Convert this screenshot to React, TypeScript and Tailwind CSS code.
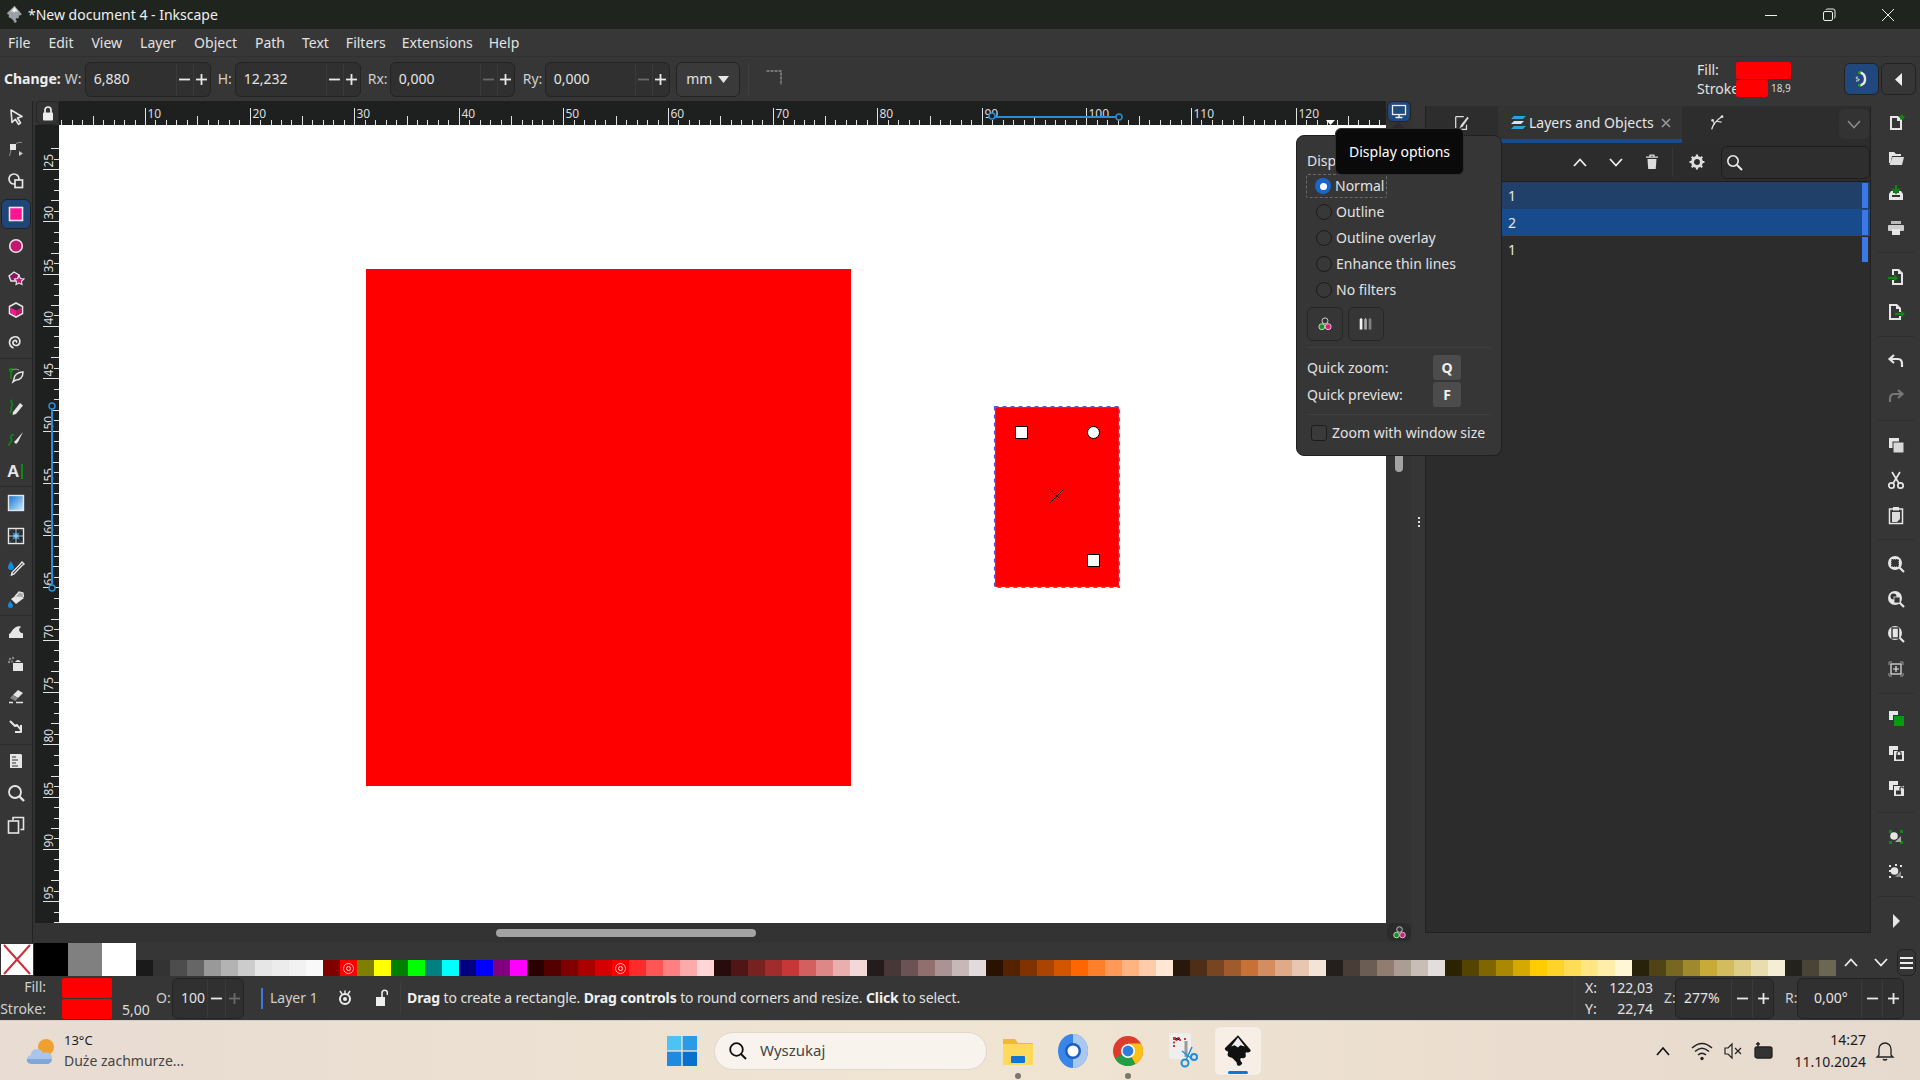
import React from "react";

const W = "#e6e6e6";
const PX = 10.46;

function S({ s = 20, children, className = "" }: { s?: number; children: React.ReactNode; className?: string }) {
  return (
    <svg width={s} height={s} viewBox="0 0 20 20" fill="none" className={"shrink-0 " + className}>
      {children}
    </svg>
  );
}

const tools: React.ReactNode[] = [
  <path d="M5 3 L16 9.5 L11.5 11 L14.5 16 L12.5 17.3 L9.3 12.3 L6 15.5 Z" fill="#3a3a3a" stroke={W} strokeWidth="1.6" strokeLinejoin="round" />,
  <g><rect x="4" y="5" width="6" height="6" fill={W} /><path d="M10 4.5 Q13 2.8 16 3.5" stroke="#888" strokeWidth="1" /><path d="M5 11 L3.5 17" stroke="#888" strokeWidth="1" /><path d="M13 12 L17 14.5 L13 17 Z" fill="#ccc" /></g>,
  <g><circle cx="8" cy="8" r="5" stroke={W} strokeWidth="1.7" /><rect x="9" y="9" width="7.5" height="7.5" fill="#333" stroke={W} strokeWidth="1.7" /></g>,
  <rect x="3.5" y="3.5" width="13" height="13" fill="#ff1493" stroke={W} strokeWidth="1.6" />,
  <circle cx="10" cy="10" r="6.3" fill="#c4176f" stroke={W} strokeWidth="1.6" />,
  <g><path d="M3 8 L8 4 L13 7 L11 13 L5 13 Z" fill="#8a1560" stroke={W} strokeWidth="1.4" /><path d="M13 7.5 L14.5 10.5 L18 11 L15.5 13.3 L16 16.5 L13 15 L10 16.5 L10.5 13.3 L8.5 11 L11.7 10.5 Z" fill="#c4176f" stroke={W} strokeWidth="1.1" /></g>,
  <g><path d="M10 3 L16.5 6.5 V13.5 L10 17 L3.5 13.5 V6.5 Z" fill="#333" stroke={W} strokeWidth="1.6" /><path d="M4.5 7.5 L10 10.5 V16 L4.5 13 Z" fill="#ff1493" /><path d="M15.5 7.5 L10 10.5 V16 L15.5 13 Z" fill="#c4176f" /></g>,
  <path d="M10 10.5 C11.5 9.5 10 8 8.5 8.5 C6 9.5 6.5 13.5 10 13.5 C14 13.5 15 8.5 12.5 6 C9.5 3.5 4 5 3.5 10 C3.5 13 5 15 7.5 16" stroke={W} strokeWidth="1.7" />,
  <g><circle cx="5" cy="5" r="2.2" fill="#0a8a12" /><path d="M5 7 V14" stroke="#0a8a12" strokeWidth="1.6" /><path d="M6 4.5 Q11 3.5 13 5" stroke="#999" strokeWidth="1" /><path d="M8 14 C8 10 12 7 17 7 C17 12 14 15 10 15 L7 17 Z" fill="#3a3a3a" stroke={W} strokeWidth="1.5" /></g>,
  <g><path d="M6 3 C3 5 8 7 6 9 C4 11 7 13 4 16" stroke="#0a8a12" strokeWidth="1.7" /><path d="M7 15 L14 6 L17 8.5 L10 17 L6.5 18 Z" fill={W} /></g>,
  <g><path d="M3 17 C2 13 8 13 5 9 C4 7 6 5 8 6" stroke="#0a8a12" strokeWidth="1.6" /><path d="M17 3 L10 11 L8 13 L10 15 L12 13 Z" fill={W} /></g>,
  <g><text x="1" y="16" fontFamily="'Liberation Sans',sans-serif" fontWeight="700" fontSize="17" fill={W}>A</text><rect x="15" y="3" width="2" height="15" fill="#0a8a12" /></g>,
  <g><rect x="2.5" y="2.5" width="15" height="15" fill="url(#grad1)" stroke={W} strokeWidth="1.4" /></g>,
  <g><rect x="2.5" y="2.5" width="15" height="15" fill="#2b2b2b" stroke={W} strokeWidth="1.4" /><path d="M3 3 Q10 12 17 3 Q8 10 17 17 Q10 8 3 17 Q12 10 3 3 Z" fill="#2a9be0" /><path d="M10 3 V17 M3 10 H17" stroke={W} strokeWidth="0.8" /></g>,
  <g><path d="M5 3 C3 6 2 7 2 9 A3 3 0 0 0 8 9 C8 7 6 6 5 3 Z" fill="#0f8de0" /><path d="M16 4 L18 6 L15.5 8 L8 16 L5.5 17 L6 14.5 L13.5 7 Z" fill="#333" stroke={W} strokeWidth="1.4" /></g>,
  <g><path d="M4 12 C2.5 14.5 2 15.5 2 16.5 A2.5 2.5 0 0 0 7 16.5 C7 15.5 5.5 14.5 4 12 Z" fill="#0f8de0" /><path d="M5 10 L12 5 L18 9 L10 15 Z" fill={W} /><path d="M9 7.5 L13 3 L17 4 L17.5 8" stroke={W} strokeWidth="1.2" fill="#aaa" /></g>,
  <path d="M3 16 V12 C5 12 6 7 10 5 C13 3.5 15 5 15 5 C13 6 12.5 8 14 10 C15 11 16 11.5 17 11 V16 Z" fill={W} />,
  <g><rect x="7" y="9" width="10" height="8" fill={W} /><path d="M9 8 Q12 4 15 8 Z" fill={W} /><circle cx="4" cy="5" r="1.2" fill="#888" /><circle cx="7" cy="4" r="1.2" fill="#888" /><circle cx="3" cy="8" r="1.2" fill="#888" /><circle cx="6" cy="7.5" r="1.2" fill="#777" /></g>,
  <g><path d="M7 9 L12 4 L17 7 L12 12 Z" fill={W} /><path d="M7 9 L12 12 L9.5 15 L4 12 Z" fill="#888" /><path d="M3 16.5 H7 M10 16.5 H17" stroke={W} strokeWidth="1.5" /></g>,
  <path d="M4 4 L9 9 L11 8 L15 13 M15 8 V15 H9" stroke={W} strokeWidth="2" strokeLinejoin="round" transform="translate(0 -1)" />,
  <g><path d="M4 3 H15 L16 4 V17 H4 Z" fill={W} /><path d="M6 6 H10 M6 9 H12 M6 12 H10 M6 15 H12" stroke="#333" strokeWidth="1.2" /></g>,
  <g><circle cx="9" cy="9" r="6" stroke={W} strokeWidth="1.8" /><path d="M13.5 13.5 L18 18" stroke={W} strokeWidth="2.4" /></g>,
  <g><rect x="2.5" y="6" width="10" height="12" fill="#333" stroke={W} strokeWidth="1.6" /><path d="M7 5 V2.5 H17.5 V14.5 H14.5" stroke={W} strokeWidth="1.6" /></g>,
];
const toolSep = new Set([7, 11, 15, 19]);

const Page = ({ children }: { children?: React.ReactNode }) => (
  <g>
    <path d="M4 3 H12 L16 7 V17 H4 Z M6 5 V15 H14 V8 H11 V5 Z" fill={W} fillRule="evenodd" />
    {children}
  </g>
);
const G = "#0a8a12";
const zoomG = (inner: React.ReactNode) => (
  <g>
    <circle cx="9" cy="9" r="7" fill={W} />
    <path d="M13.5 13.5 L18 18" stroke={W} strokeWidth="2.2" />
    {inner}
  </g>
);
const doubleSq = (inner: React.ReactNode) => (
  <g>
    <rect x="3" y="3" width="9" height="9" fill={W} />
    <rect x="7" y="7" width="10" height="10" fill="#333" />
    {inner}
  </g>
);
const rightGroups: React.ReactNode[][] = [
  [
    <g><Page /><path d="M16 0.5 L17 3 L19.5 3 L17.5 4.7 L18.2 7 L16 5.6 L13.8 7 L14.5 4.7 L12.5 3 L15 3 Z" fill={G} /></g>,
    <g><path d="M3 4 H8 L10 6 H15 V8 H6 L4.5 15 H3 Z" fill={W} /><path d="M6.5 9 H18 L16 17 H3.5 Z" fill="#ddd" /></g>,
    <g><path d="M3 11 L5 8 H7 V10 H13 V8 H15 L17 11 V17 H3 Z" fill={W} /><rect x="6" y="12" width="8" height="2" fill="#333" /><path d="M10 2 V9 M6.5 6 L10 10 L13.5 6" stroke={G} strokeWidth="2" /></g>,
    <g><rect x="5" y="3" width="10" height="3" fill="#bbb" /><rect x="2" y="7" width="16" height="6" rx="1" fill="#ccc" /><rect x="6" y="11" width="8" height="6" fill={W} /></g>,
  ],
  [
    <g><path d="M6 2 H13 L17 6 V18 H6 V13 H8 V16 H15 V7 H12 V4 H8 V8 H6 Z" fill={W} /><path d="M2 11 H10" stroke={G} strokeWidth="2.2" /><path d="M8 7.5 L12 11 L8 14.5 Z" fill={G} /></g>,
    <g><path d="M3 2 H11 L15 6 V10 H13 V7 H10 V4 H5 V16 H13 V14 H15 V18 H3 Z" fill={W} /><path d="M9 12 H17" stroke={G} strokeWidth="2.2" /><path d="M15 8.5 L19 12 L15 15.5 Z" fill={G} /></g>,
  ],
  [
    <path d="M8 4 L3.5 8 L8 12 M4 8 H12 C15 8 16 10 16 13 V16" stroke={W} strokeWidth="2.2" />,
    <path d="M12 4 L16.5 8 L12 12 M16 8 H8 C5 8 4 10 4 13 V16" stroke="#777" strokeWidth="2.2" />,
  ],
  [
    <g><rect x="3" y="3" width="10" height="10" fill={W} /><rect x="7" y="7" width="11" height="11" fill="#d8d8d8" stroke="#333" strokeWidth="1" /></g>,
    <g><circle cx="5.5" cy="15.5" r="2.7" stroke={W} strokeWidth="1.7" /><circle cx="14.5" cy="15.5" r="2.7" stroke={W} strokeWidth="1.7" /><path d="M7 13.5 L14 2 M13 13.5 L6 2" stroke={W} strokeWidth="1.7" /></g>,
    <g><rect x="3.5" y="4" width="13" height="14.5" fill="none" stroke={W} strokeWidth="1.5" /><rect x="7" y="2" width="6" height="3.5" fill={W} /><path d="M6 7 H14 V14 L11 17 H6 Z" fill="#ddd" /></g>,
  ],
  [
    zoomG(<rect x="5" y="5" width="8" height="8" fill="#333" stroke={W} strokeDasharray="1 1" />),
    zoomG(<g><circle cx="7.5" cy="7.5" r="3" fill="#333" /><rect x="8" y="8" width="6" height="6" fill="#333" stroke={W} strokeWidth="0.8" /></g>),
    zoomG(<rect x="6" y="4" width="6.5" height="10" fill={W} stroke="#333" strokeWidth="1.4" />),
    <g><path d="M6 3 H3 V6 M14 3 H17 V6 M3 14 V17 H6 M17 14 V17 H14" stroke="#999" strokeWidth="1" /><rect x="5" y="5" width="10" height="10" stroke={W} strokeWidth="1.2" /><path d="M10 7 V13 M7 10 H13" stroke={W} strokeWidth="1.2" /></g>,
  ],
  [
    doubleSq(<rect x="8" y="8" width="10" height="10" fill="#0a9a12" />),
    doubleSq(<g><rect x="8" y="8" width="10" height="10" fill={W} /><rect x="10" y="12" width="6" height="4.5" fill="#333" /><path d="M11 12 V10.5 A2 2 0 0 1 15 10.5 V12" stroke="#333" strokeWidth="1.2" /></g>),
    doubleSq(<g><rect x="8" y="8" width="10" height="10" fill={W} /><rect x="10" y="12.5" width="5" height="4" fill="#333" /><path d="M14 12.5 V10.5 A1.7 1.7 0 0 1 17.4 10.5" stroke="#333" strokeWidth="1.2" /></g>),
  ],
  [
    <g><path d="M3 3 H6 V6 H3 Z M14 3 H17 V6 H14 Z M3 14 H6 V17 H3 Z M14 14 H17 V17 H14 Z" fill={G} /><path d="M9 15 L15 9 V15 Z" fill="#aaa" /><circle cx="8" cy="9" r="3.8" fill={W} /></g>,
    <g><path d="M3 3 H5 V5 H3 Z M14 3 H16 V5 H14 Z M3 14 H5 V16 H3 Z M15 14 H17 V16 H15 Z M9 2 H11 V4 H9 Z M3 8 H5 V10 H3 Z" fill={W} /><path d="M9 15 L15 9 V15 Z" fill="#888" /><circle cx="8.5" cy="9" r="3.8" fill={W} /></g>,
  ],
  [<path d="M7 3 L14 10 L7 17 Z" fill={W} transform="translate(0 0) scale(1 1)" />],
];

const grays = "1a1a1a 333333 4d4d4d 666666 999999 b3b3b3 cccccc e6e6e6 ececec f2f2f2 f9f9f9";
const basics = "800000 ff0000 808000 ffff00 008000 00ff00 008080 00ffff 000080 0000ff 800080 ff00ff";
const rest =
  "2b0000 550000 800000 aa0000 d40000 ff0000 ff2a2a ff5555 ff8080 ffaaaa ffd5d5 280b0b 501616 782121 a02c2c c83737 d35f5f de8787 e9afaf f4d7d7 241c1c 483737 6c5353 916f6f ac9393 c8b7b7 e3dbdb 2b1100 552200 803300 aa4400 d45500 ff6600 ff7f2a ff9955 ffb380 ffccaa ffe6d5 28170b 502d16 784421 a05a2c c87137 d38d5f deaa87 e9c6af f4e3d7 241f1c 483e37 6c5d53 917c6f ac9d93 c8beb7 e3dedb 2b2200 554400 806600 aa8800 d4aa00 ffcc00 ffd42a ffdd55 ffe680 ffeeaa fff6d5 28220b 504416 786721 a0892c c8ab37 d3bc5f decd87 e9ddaf f4eed7 24221c 484537 6c6753";
const swatches = (grays + " " + basics + " " + rest).split(" ");
const markers = new Set([12, 28]);

function Pm({ dim = false, kind }: { dim?: boolean; kind: "m" | "p" }) {
  const c = dim ? "#6a6a6a" : "#e8e8e8";
  return (
    <svg width="13" height="13" viewBox="0 0 13 13">
      <path d="M1 6.5 H12" stroke={c} strokeWidth="1.8" />
      {kind === "p" && <path d="M6.5 1 V12" stroke={c} strokeWidth="1.8" />}
    </svg>
  );
}

function Spin({ value, w, cell = 17, dimMinus = false, dimPlus = false, pad = 8, h = "h-[35px]" }: { value: string; w: string; cell?: number; dimMinus?: boolean; dimPlus?: boolean; pad?: number; h?: string }) {
  return (
    <div className={w + " " + h + " flex items-center rounded-md border border-[#232323] bg-[#303030] shrink-0"}>
      <span className="flex-1 min-w-0 truncate text-[#e4e4e4]" style={{ paddingLeft: pad }}>{value}</span>
      <span className="h-full flex items-center justify-center border-l border-[#3a3a3a]" style={{ width: cell }}><Pm kind="m" dim={dimMinus} /></span>
      <span className="h-full flex items-center justify-center border-l border-[#3a3a3a]" style={{ width: cell }}><Pm kind="p" dim={dimPlus} /></span>
    </div>
  );
}

function HRuler() {
  const items: React.ReactNode[] = [];
  const zero = 145 - 59 - 10 * PX;
  for (let u = 2; u <= 128; u++) {
    const x = Math.round(zero + u * PX) + 0.5;
    const big = u % 10 === 0;
    const mid = u % 5 === 0;
    const h = big ? 17 : mid ? 9 : 5;
    items.push(<line key={u} x1={x} x2={x} y1={24 - h} y2={24} stroke="#e2e2e2" strokeWidth="1" />);
    if (big) items.push(<text key={"t" + u} x={x + 2} y={17} fontSize="12" fill="#dddddd" fontFamily="'Noto Sans',sans-serif">{u}</text>);
  }
  return (
    <svg width="1327" height="24" className="block">
      {items}
      <path d="M933 21 H938" stroke="none" />
      <line x1="933" x2="1060" y1="16" y2="16" stroke="#2a8bd6" strokeWidth="2" />
      <circle cx="933" cy="15" r="3" fill="#1e2020" stroke="#2a8bd6" strokeWidth="1.5" />
      <circle cx="1060" cy="16" r="3" fill="#1e2020" stroke="#2a8bd6" strokeWidth="1.5" />
      <path d="M1267 19 L1276 19 L1271.5 24 Z" fill="#ffffff" />
    </svg>
  );
}

function VRuler() {
  const items: React.ReactNode[] = [];
  for (let u = 23; u <= 97; u++) {
    const y = Math.round(169 - 125 + (u - 25) * PX) + 0.5;
    const big = u % 5 === 0;
    const mid = (u + 2) % 5 === 0 && false;
    const h = big ? 16 : u % 5 === 3 ? 8 : 5;
    items.push(<line key={u} y1={y} y2={y} x1={24 - (mid ? 8 : h)} x2={24} stroke="#e2e2e2" strokeWidth="1" />);
    if (big)
      items.push(
        <text key={"t" + u} x={0} y={0} fontSize="12" fill="#dddddd" fontFamily="'Noto Sans',sans-serif" transform={`translate(18 ${y - 2}) rotate(-90)`}>
          {u}
        </text>
      );
  }
  return (
    <svg width="24" height="798" className="block">
      {items}
      <line x1="17" x2="17" y1="281" y2="463" stroke="#2a8bd6" strokeWidth="2" />
      <circle cx="17" cy="281" r="3" fill="#1e2020" stroke="#2a8bd6" strokeWidth="1.5" />
      <circle cx="17" cy="463" r="3" fill="#1e2020" stroke="#2a8bd6" strokeWidth="1.5" />
    </svg>
  );
}

const ColorIcon = ({ s = 20 }: { s?: number }) => (
  <S s={s}>
    <circle cx="10" cy="6.5" r="3.3" stroke="#ddd" strokeWidth="1" fill="#333" />
    <circle cx="6.5" cy="13" r="3.3" stroke="#ddd" strokeWidth="1" fill="#0a9a12" />
    <circle cx="13.5" cy="13" r="3.3" stroke="#ddd" strokeWidth="1" fill="#e0187f" />
  </S>
);

function Radio({ label, on = false }: { label: string; on?: boolean }) {
  return (
    <div className={"h-[26px] flex items-center " + (on ? "" : "")}>
      <div className={on ? "h-[24px] w-[81px] -ml-[1px] pl-[8px] flex items-center border border-dashed border-[#6a6a6a] rounded-[2px]" : "pl-[9px] flex items-center"}>
        {on ? (
          <span className="w-4 h-4 rounded-full bg-[#1a66cc] flex items-center justify-center shrink-0"><span className="w-[7px] h-[7px] rounded-full bg-white" /></span>
        ) : (
          <span className="w-4 h-4 rounded-full border border-[#1c1c1c] bg-[#383838] shrink-0" />
        )}
        <span className="ml-[4px] whitespace-nowrap">{label}</span>
      </div>
    </div>
  );
}

const Row = ({ n, bg }: { n: string; bg: string }) => (
  <div className={"h-[27px] flex items-center " + bg}>
    <span className="ml-[82px] flex-1 text-[#e6e6e6]">{n}</span>
    <span className="w-[6px] h-[25px] bg-[#3b78e7] mr-[2px]" />
  </div>
);

const InkLogo = ({ s = 30, c = "#111" }: { s?: number; c?: string }) => (
  <svg width={s} height={s} viewBox="0 0 30 30">
    <path d="M15 1 L26 14 C27 16 24 17 22 16 C21 18 23 19 21 21 C19 22 18 20 17 22 C17 25 20 25 18 27 C16 29 14 28 14 26 C14 24 12 24 11 22 C9 20 7 21 6 19 C5 17 8 16 5 15 C3 14 3 13 4 12 Z" fill={c} />
    <path d="M15 3 L21 11 L17 10 L15 12 L12 10 L9 11 Z" fill="#eeeeee" />
  </svg>
);

export default function App() {
  return (
    <div className="relative w-[1920px] h-[1080px] overflow-hidden flex flex-col bg-[#363636] text-[14px] text-[#e2e2e2] font-['Noto_Sans',sans-serif] leading-none">
      <svg width="0" height="0" className="absolute">
        <defs>
          <linearGradient id="grad1" x1="0" y1="0" x2="1" y2="1">
            <stop offset="0" stopColor="#0f6fd0" />
            <stop offset="1" stopColor="#cfeeff" />
          </linearGradient>
        </defs>
      </svg>

      {/* Title bar */}
      <div className="h-[29px] bg-[#1f241e] flex items-center shrink-0">
        <div className="ml-[3px] w-[22px] flex justify-center"><InkLogo s={19} c="#9aa0a6" /></div>
        <span className="ml-[3px] text-[14px] text-[#f0f0f0]">*New document 4 - Inkscape</span>
        <div className="ml-auto flex items-center">
          <svg width="14" height="14" viewBox="0 0 14 14" className="mr-[44px]"><path d="M1 7.5 H13" stroke="#eee" strokeWidth="1" /></svg>
          <svg width="14" height="14" viewBox="0 0 14 14" className="mr-[45px]"><rect x="1.5" y="3.5" width="9" height="9" rx="1.5" stroke="#eee" fill="none" /><path d="M4 2 Q4 1 5.5 1 H11 Q13 1 13 3 V9 Q13 10 12 10" stroke="#eee" fill="none" /></svg>
          <svg width="14" height="14" viewBox="0 0 14 14" className="mr-[25px]"><path d="M1 1 L13 13 M13 1 L1 13" stroke="#eee" strokeWidth="1" /></svg>
        </div>
      </div>

      {/* Menu */}
      <div className="h-[28px] bg-[#373737] flex items-center shrink-0 border-b border-[#303030]">
        {[["File", "ml-[8px]"], ["Edit", "ml-[18px]"], ["View", "ml-[18px]"], ["Layer", "ml-[18px]"], ["Object", "ml-[18px]"], ["Path", "ml-[18px]"], ["Text", "ml-[17px]"], ["Filters", "ml-[17px]"], ["Extensions", "ml-[16px]"], ["Help", "ml-[16px]"]].map(([t, m]) => (
          <span key={t} className={m + " text-[#e2e2e2]"}>{t}</span>
        ))}
      </div>

      {/* Tool controls */}
      <div className="h-[44px] bg-[#363636] flex items-center shrink-0">
        <span className="ml-[4px] font-bold text-[#eeeeee]">Change:</span>
        <span className="ml-[4px] w-[20px] text-[#cfcfcf]">W:</span>
        <Spin value="6,880" w="w-[126px]" />
        <span className="ml-[7px] w-[17px] text-[#cfcfcf]">H:</span>
        <Spin value="12,232" w="w-[126px]" />
        <span className="ml-[7px] w-[22px] text-[#cfcfcf]">Rx:</span>
        <Spin value="0,000" w="w-[125px]" dimMinus />
        <span className="ml-[8px] w-[22px] text-[#cfcfcf]">Ry:</span>
        <Spin value="0,000" w="w-[125px]" dimMinus />
        <div className="ml-[6px] w-[64px] h-[35px] rounded-md border border-[#232323] bg-[#3a3a3a] flex items-center justify-center gap-[6px] shrink-0">
          <span>mm</span>
          <svg width="11" height="7" viewBox="0 0 11 7"><path d="M0 0 H11 L5.5 7 Z" fill="#e6e6e6" /></svg>
        </div>
        <span className="ml-[8px] w-px h-[32px] bg-[#3f3f3f]" />
        <svg width="16" height="18" viewBox="0 0 16 18" className="ml-[17px]"><path d="M0.5 1 H15 V15" stroke="#8a8a8a" strokeWidth="1.5" fill="none" strokeDasharray="3 1" /></svg>
        <div className="ml-auto flex items-center">
          <div className="flex flex-col w-[39px] gap-[5px] text-[14px] text-[#e2e2e2]">
            <span>Fill:</span>
            <span>Stroke:</span>
          </div>
          <div className="flex flex-col gap-px w-[55px] ml-[0px]">
            <div className="h-[17px] bg-[#ff0000] rounded-[2px] flex"><span className="w-[28px] border-r border-[#d81010]" /></div>
            <div className="h-[17px] flex items-center">
              <span className="w-[32px] h-full bg-[#ff0000] rounded-[2px]" />
              <span className="ml-[3px] text-[10px] text-[#dddddd]">18,9</span>
            </div>
          </div>
          <div className="ml-[53px] w-[35px] h-[32px] rounded-md bg-[#21487c] border border-[#222] flex items-center justify-center">
            <S s={20}><path d="M8 3.5 A6.7 6.7 0 0 1 8 16.5" stroke={W} strokeWidth="2.4" /><rect x="6" y="2.5" width="2.5" height="2.5" fill="#1a9a20" /><rect x="6" y="15" width="2.5" height="2.5" fill="#1a9a20" /><path d="M6 8 C3 8 3.5 10 6 10 C8 10 8 12 4 12" stroke={W} strokeWidth="1" /></S>
          </div>
          <div className="ml-[2px] mr-[4px] w-[35px] h-[32px] rounded-md bg-[#363636] border border-[#222] flex items-center justify-center">
            <svg width="8" height="13" viewBox="0 0 8 13"><path d="M7 0 V13 L0 6.5 Z" fill="#eee" /></svg>
          </div>
        </div>
      </div>

      {/* Main */}
      <div className="flex-1 min-h-0 flex">
        {/* left toolbar */}
        <div className="w-[33px] shrink-0 flex flex-col border-r border-[#222222] bg-[#363636]">
          {tools.map((t, i) => (
            <div key={i} className={"h-[32.2px] shrink-0 flex items-center justify-center " + (toolSep.has(i) ? "border-b border-[#2b2b2b]" : "")}>
              {i === 3 ? (
                <div className="w-[30px] h-[30px] rounded-md bg-[#1f4677] border border-[#222] flex items-center justify-center"><S s={20}>{t}</S></div>
              ) : (
                <S s={20}>{t}</S>
              )}
            </div>
          ))}
        </div>

        {/* rulers + canvas */}
        <div className="w-[1353px] shrink-0 flex flex-col bg-[#333333]">
          <div className="h-[24px] shrink-0 flex">
            <div className="w-[26px] pl-[3px] shrink-0 flex">
              <div className="w-[23px] h-[24px] rounded-b-md rounded-t-sm bg-[#333333] border border-[#262626] flex items-center justify-center">
                <svg width="12" height="15" viewBox="0 0 12 15"><path d="M3 7 V4 A3 3 0 0 1 9 4 V7" stroke="#eee" strokeWidth="1.7" fill="none" /><rect x="1" y="6.5" width="10" height="8" rx="1" fill="#eee" /></svg>
              </div>
            </div>
            <div className="flex-1 bg-[#1e2020]"><HRuler /></div>
          </div>
          <div className="flex-1 min-h-0 flex">
            <div className="w-[26px] pl-[2px] shrink-0">
              <div className="w-[24px] h-[798px] bg-[#1e2020]"><VRuler /></div>
            </div>
            <div className="relative flex-1 bg-white overflow-hidden">
              <div className="absolute left-[307px] top-[144px] w-[485px] h-[517px] bg-[#ff0000]" />
              <svg width="1327" height="798" className="absolute left-0 top-0">
                <rect x="935.5" y="281.5" width="125" height="181" fill="#ff0000" />
                <rect x="935.5" y="281.5" width="125" height="181" fill="none" stroke="#ffffff" strokeWidth="1.2" />
                <rect x="935.5" y="281.5" width="125" height="181" fill="none" stroke="#6a4fd8" strokeWidth="1.2" strokeDasharray="4 4" />
                <rect x="956.5" y="301.5" width="12" height="12" fill="#fff" stroke="#000" />
                <circle cx="1034.5" cy="307.5" r="6" fill="#fff" stroke="#000" />
                <rect x="1028.5" y="429.5" width="12" height="12" fill="#fff" stroke="#000" />
                <path d="M991.5 364.5 L1004.5 377.5 M1004.5 364.5 L991.5 377.5" stroke="#000" strokeWidth="1" />
              </svg>
            </div>
          </div>
          <div className="h-[20px] shrink-0 flex items-center">
            <div className="w-[463px] shrink-0" />
            <div className="w-[260px] h-[8px] rounded-full bg-[#a3a3a3]" />
          </div>
        </div>

        {/* vertical scrollbar column */}
        <div className="w-[26px] shrink-0 flex flex-col items-center bg-[#333333] pb-[2px]">
          <div className="w-[24px] h-[21px] rounded-md bg-[#214a7e] border border-[#232323] flex items-center justify-center">
            <svg width="16" height="15" viewBox="0 0 16 15"><rect x="1.5" y="1.5" width="13" height="9" stroke="#eee" strokeWidth="1.3" fill="none" /><path d="M8 11 V13 M4.5 13.5 H11.5" stroke="#eee" strokeWidth="1.5" /></svg>
          </div>
          <div className="w-2 h-[70px] mt-[280px] rounded-full bg-[#a3a3a3]" />
          <div className="mt-auto w-[24px] h-[18px] rounded-md bg-[#2b2b2b] flex items-center justify-center"><ColorIcon s={17} /></div>
        </div>

        {/* handle */}
        <div className="w-[13px] shrink-0 flex flex-col items-center justify-center gap-[2px]">
          <span className="w-[2px] h-[2px] bg-[#dddddd]" />
          <span className="w-[2px] h-[2px] bg-[#dddddd]" />
          <span className="w-[2px] h-[2px] bg-[#dddddd]" />
        </div>

        {/* dock panel */}
        <div className="w-[446px] shrink-0 mt-[5px] mb-[10px] flex flex-col bg-[#2c2c2c] border border-[#202020] border-t-0">
          <div className="h-[37px] shrink-0 flex bg-[#2d2d2d]">
            <div className="w-[72px] flex items-center justify-center pb-[3px]">
              <S s={18}><path d="M3 3 H12 M3 3 V17 H15 V12" stroke="#ddd" strokeWidth="1.4" /><path d="M16 3 L9 12 L7 16 L11 13.5 L17.5 4.5 Z" fill="#ddd" /></S>
            </div>
            <div className="w-[184px] h-[37px] flex items-center bg-[#333333] border-b-4 border-[#1a4a8c]">
              <svg width="16" height="15" viewBox="0 0 16 15" className="ml-[13px]"><path d="M3 1 H15 L12 4 H0 Z" fill="#2aa0e0" /><path d="M3 6 H13 L10 9 H0 Z" fill="#cfe8f5" /><path d="M3 11 H15 L12 14 H0 Z" fill="#2aa0e0" /></svg>
              <span className="ml-[2px] whitespace-nowrap text-[#e6e6e6]">Layers and Objects</span>
              <svg width="10" height="10" viewBox="0 0 10 10" className="ml-[7px]"><path d="M1 1 L9 9 M9 1 L1 9" stroke="#999" strokeWidth="1.6" /></svg>
            </div>
            <div className="w-[72px] flex items-center justify-center pb-[3px]">
              <S s={18}><path d="M3 17 C4 12 7 8 14 3" stroke="#ddd" strokeWidth="1.5" /><circle cx="14.5" cy="3" r="1.5" fill="#ddd" /><circle cx="4" cy="7" r="1.5" fill="#ddd" /><path d="M5 8 L6 12 M8 8 L14 9" stroke="#ddd" strokeWidth="1.2" /></S>
            </div>
            <div className="ml-auto mr-px mt-[3px] w-[30px] h-[30px] rounded-md bg-[#333333] flex items-center justify-center">
              <svg width="14" height="9" viewBox="0 0 14 9"><path d="M1 1 L7 7.5 L13 1" stroke="#8a8a8a" strokeWidth="1.6" fill="none" /></svg>
            </div>
          </div>
          <div className="h-[39px] shrink-0 flex items-center border-b border-[#1e1e1e]">
            <svg width="14" height="9" viewBox="0 0 14 9" className="ml-[147px]"><path d="M1 8 L7 1.5 L13 8" stroke="#eee" strokeWidth="1.8" fill="none" /></svg>
            <svg width="14" height="9" viewBox="0 0 14 9" className="ml-[22px]"><path d="M1 1 L7 7.5 L13 1" stroke="#eee" strokeWidth="1.8" fill="none" /></svg>
            <svg width="14" height="16" viewBox="0 0 14 16" className="ml-[22px]"><path d="M1 3 H13 M5 3 V1 H9 V3" stroke="#ddd" strokeWidth="1.3" fill="none" /><path d="M2.5 5 H11.5 L10.8 15 H3.2 Z" fill="#ddd" /></svg>
            <span className="ml-[13px] w-px h-[30px] bg-[#353535]" />
            <svg width="16" height="16" viewBox="0 0 16 16" className="ml-[16px]"><circle cx="8" cy="8" r="4.5" stroke="#ddd" strokeWidth="3" fill="none" strokeDasharray="none" /><path d="M8 0.5 V3 M8 13 V15.5 M0.5 8 H3 M13 8 H15.5 M2.7 2.7 L4.5 4.5 M11.5 11.5 L13.3 13.3 M13.3 2.7 L11.5 4.5 M4.5 11.5 L2.7 13.3" stroke="#ddd" strokeWidth="2.2" /></svg>
            <div className="ml-[16px] w-[150px] h-[33px] rounded-md border border-[#1e1e1e] bg-[#2e2e2e] flex items-center">
              <svg width="17" height="17" viewBox="0 0 17 17" className="ml-[4px]"><circle cx="7" cy="7" r="5.2" stroke="#eee" strokeWidth="1.6" fill="none" /><path d="M11 11 L16 16" stroke="#eee" strokeWidth="2" /></svg>
            </div>
          </div>
          <Row n="1" bg="bg-[#20406a]" />
          <Row n="2" bg="bg-[#174b8c]" />
          <Row n="1" bg="" />
        </div>

        {/* right command bar */}
        <div className="flex-1 pt-[4.5px] flex flex-col items-center">
          {rightGroups.map((g, i) => (
            <div key={i} className="w-full flex flex-col items-center">
              {g.map((ic, j) => (
                <div key={j} className="h-[35px] flex items-center justify-center"><S s={20}>{ic}</S></div>
              ))}
              {i < rightGroups.length - 1 && (
                <div className="h-[14px] w-[36px] flex items-center"><span className="w-full h-px bg-[#2e2e2e]" /></div>
              )}
            </div>
          ))}
        </div>
      </div>

      {/* Palette */}
      <div className="h-[33px] shrink-0 flex items-end bg-[#363636]">
        <div className="w-[34px] h-[33px] bg-white shrink-0 border border-[#333]">
          <svg width="32" height="31" viewBox="0 0 32 31"><path d="M3 1 L29 30 M29 1 L3 30" stroke="#c8303a" strokeWidth="2" /></svg>
        </div>
        <span className="w-[34px] h-[33px] bg-black shrink-0" />
        <span className="w-[34px] h-[33px] bg-[#808080] shrink-0" />
        <span className="w-[34px] h-[33px] bg-white shrink-0" />
        {swatches.map((c, i) => (
          <span key={i} className="w-[17px] h-[16px] shrink-0 flex items-center justify-center" style={{ backgroundColor: "#" + c }}>
            {markers.has(i) && (
              <span className="w-[11px] h-[11px] rounded-full border border-[#ffc0c0] flex items-center justify-center"><span className="w-[5px] h-[5px] rounded-full border border-[#ffd8d8]" /></span>
            )}
          </span>
        ))}
        <div className="flex items-center h-[27px] ml-[8px]">
          <svg width="14" height="9" viewBox="0 0 14 9"><path d="M1 8 L7 1.5 L13 8" stroke="#eee" strokeWidth="1.8" fill="none" /></svg>
          <svg width="14" height="9" viewBox="0 0 14 9" className="ml-[16px]"><path d="M1 1 L7 7.5 L13 1" stroke="#eee" strokeWidth="1.8" fill="none" /></svg>
          <div className="ml-[9px] w-[19px] h-[27px] rounded-md border border-[#222] flex flex-col items-center justify-center gap-[3px]">
            <span className="w-[13px] h-[2px] bg-[#eee]" />
            <span className="w-[13px] h-[2px] bg-[#eee]" />
            <span className="w-[13px] h-[2px] bg-[#eee]" />
          </div>
        </div>
      </div>

      {/* Status bar */}
      <div className="h-[44px] shrink-0 flex items-center bg-[#363636]">
        <div className="w-[46px] flex flex-col items-end gap-[8px] text-[#cfcfcf]">
          <span>Fill:</span>
          <span>Stroke:</span>
        </div>
        <div className="ml-[16px] w-[50px] flex flex-col gap-px">
          <span className="h-[20px] bg-[#ff0000] rounded-[2px]" />
          <span className="h-[20px] bg-[#ff0000] rounded-[2px]" />
        </div>
        <span className="ml-[10px] w-[27px] self-end mb-[3px] text-[#dddddd]">5,00</span>
        <span className="ml-[7px] w-[16px] text-[#cfcfcf]">O:</span>
        <Spin value="100" w="w-[72px]" cell={18} h="h-[41px]" dimPlus />
        <span className="ml-[17px] w-[2px] h-[21px] bg-[#3b78e7]" />
        <span className="ml-[7px] w-[62px] text-[#d0d0d0]">Layer 1</span>
        <svg width="16" height="16" viewBox="0 0 16 16" className="ml-[5px]"><circle cx="8" cy="9" r="5" stroke="#eee" strokeWidth="2" fill="none" /><circle cx="8" cy="9" r="2" fill="#eee" /><path d="M3 1 L5 4 M13 1 L11 4 M8 0.5 V3" stroke="#eee" strokeWidth="1.4" /></svg>
        <svg width="14" height="18" viewBox="0 0 14 18" className="ml-[21px]"><path d="M8 8 V4 A2.7 2.7 0 0 1 13.4 4 V6" stroke="#eee" strokeWidth="1.6" fill="none" /><rect x="2" y="8" width="9" height="9" fill="#eee" /></svg>
        <span className="ml-[12px] w-px h-[32px] bg-[#3f3f3f]" />
        <span className="ml-[6px] flex-1 whitespace-nowrap text-[#e2e2e2] tracking-[-0.1px]"><b className="text-[#f0f0f0]">Drag</b> to create a rectangle. <b className="text-[#f0f0f0]">Drag controls</b> to round corners and resize. <b className="text-[#f0f0f0]">Click</b> to select.</span>
        <span className="w-px h-[44px] bg-[#3c3c3c]" />
        <div className="ml-[10px] w-[68px] flex flex-col gap-[7px] text-[#e2e2e2]">
          <div className="flex justify-between"><span>X:</span><span>122,03</span></div>
          <div className="flex justify-between"><span>Y:</span><span>22,74</span></div>
        </div>
        <span className="ml-[11px] w-[11px] text-[#cfcfcf]">Z:</span>
        <Spin value="277%" w="w-[99px]" cell={21} h="h-[41px]" />
        <span className="ml-[11px] w-[12px] text-[#cfcfcf]">R:</span>
        <Spin value="0,00°" w="w-[107px]" cell={21} pad={16} h="h-[41px]" />
        <span className="w-[16px]" />
      </div>

      {/* Taskbar */}
      <div className="h-[60px] shrink-0 flex items-center bg-gradient-to-r from-[#e8dcd3] via-[#f0e4d2] to-[#e6d9ce] text-[#1c1c1c] border-t border-[#d8cdc2]">
        <div className="w-[667px] shrink-0 flex items-center">
          <svg width="34" height="30" viewBox="0 0 34 30" className="ml-[24px]">
            <circle cx="22" cy="11" r="8" fill="#f0a030" />
            <path d="M8 28 C2 28 1 20 7 19 C7 12 17 11 19 17 C26 15 30 20 27 24 C27 27 25 28 23 28 Z" fill="#a9c6ea" />
            <path d="M8 28 C4 28 2 25 3 23 H28 C28 26 25 28 23 28 Z" fill="#7fa7dc" />
          </svg>
          <div className="ml-[6px] flex flex-col gap-[7px]">
            <span className="text-[13px]">13°C</span>
            <span className="text-[14px] text-[#444]">Duże zachmurze...</span>
          </div>
        </div>
        <svg width="30" height="30" viewBox="0 0 30 30" className="shrink-0">
          <rect width="14.3" height="14.3" fill="#4cc2f5" />
          <rect x="15.7" width="14.3" height="14.3" fill="#2a9be8" />
          <rect y="15.7" width="14.3" height="14.3" fill="#1f8ae0" />
          <rect x="15.7" y="15.7" width="14.3" height="14.3" fill="#0a70d0" />
        </svg>
        <div className="ml-[17px] w-[273px] h-[38px] rounded-full bg-[#f8f3ec] border border-[#e0d8cc] flex items-center shrink-0">
          <svg width="20" height="20" viewBox="0 0 20 20" className="ml-[13px]"><circle cx="8.5" cy="8.5" r="6.3" stroke="#111" strokeWidth="1.8" fill="none" /><path d="M13 13 L18 18" stroke="#111" strokeWidth="2" /></svg>
          <span className="ml-[12px] text-[15px] text-[#444]">Wyszukaj</span>
        </div>
        <div className="ml-[3px] w-[55px] h-[60px] shrink-0 flex flex-col items-center justify-center relative">
          <svg width="30" height="30" viewBox="0 0 30 30"><path d="M0 3 H12 L15 7 H30 V28 H0 Z" fill="#f3b92e" /><path d="M0 8 H30 V29 H0 Z" fill="#ffd95a" /><rect x="8" y="20" width="14" height="7" rx="1" fill="#0c78d0" /></svg>
          <span className="absolute bottom-[2px] w-[6px] h-[6px] rounded-full bg-[#7b7670]" />
        </div>
        <div className="w-[55px] shrink-0 flex justify-center">
          <svg width="30" height="34" viewBox="0 0 30 34"><ellipse cx="15" cy="17" rx="15" ry="17" fill="#3a86e8" /><path d="M15 0 A15 17 0 0 1 30 17 A15 17 0 0 1 15 34 Z" fill="#a8c8f2" /><circle cx="15" cy="17" r="8" fill="#1a5fc0" /><circle cx="15" cy="17" r="5.5" fill="#ffffff" /></svg>
        </div>
        <div className="w-[55px] h-[60px] shrink-0 flex items-center justify-center relative">
          <svg width="30" height="34" viewBox="-15 -15 30 30">
            <circle r="15" fill="#dd3b2c" />
            <path d="M0 0 L-13 7.5 A15 15 0 0 0 7.5 13 Z" fill="#1f9d47" />
            <path d="M0 0 L7.5 13 A15 15 0 0 0 13 -7.5 L0 -7.5 Z" fill="#fbc117" />
            <circle r="7" fill="#fff" />
            <circle r="5.4" fill="#2d7de0" />
          </svg>
          <span className="absolute bottom-[2px] w-[6px] h-[6px] rounded-full bg-[#7b7670]" />
        </div>
        <div className="w-[55px] shrink-0 flex justify-center">
          <svg width="30" height="36" viewBox="0 0 30 36"><rect x="1" y="0" width="22" height="26" rx="3" fill="#eeeeee" /><path d="M6 5 H12 V7 H6 Z M6 5 V14 M17 5 V7" stroke="#d03a2c" strokeWidth="2" strokeDasharray="2 1.5" /><path d="M18 8 V24" stroke="#9a9a9a" strokeWidth="3" /><circle cx="17" cy="30" r="3.5" stroke="#1d8fe0" strokeWidth="2" fill="none" /><circle cx="26" cy="24" r="3" stroke="#1d8fe0" strokeWidth="2" fill="none" /><path d="M18 27 L24 14 M24 26 L14 18" stroke="#1d8fe0" strokeWidth="1.5" /></svg>
        </div>
        <div className="ml-[4px] w-[48px] h-[50px] rounded-md bg-[#f7efe5] border border-[#e8dfd2] shrink-0 flex flex-col items-center justify-center relative">
          <InkLogo s={34} />
          <span className="absolute bottom-[1px] w-[20px] h-[3px] rounded-full bg-[#0a78d4]" />
        </div>
        <div className="flex-1" />
        <svg width="16" height="10" viewBox="0 0 16 10"><path d="M2 9 L8 2 L14 9" stroke="#111" strokeWidth="1.6" fill="none" /></svg>
        <svg width="22" height="20" viewBox="0 0 22 20" className="ml-[20px]"><path d="M1 7 Q11 -2 21 7 M4 10.5 Q11 4 18 10.5 M7 14 Q11 10.5 15 14" stroke="#222" strokeWidth="1.6" fill="none" /><circle cx="11" cy="17.5" r="1.7" fill="#222" /></svg>
        <svg width="18" height="18" viewBox="0 0 18 18" className="ml-[11px]"><path d="M1 6 H4 L8 2 V16 L4 12 H1 Z" stroke="#222" strokeWidth="1.2" fill="none" /><path d="M11 6 L17 12 M17 6 L11 12" stroke="#222" strokeWidth="1.2" /></svg>
        <svg width="20" height="20" viewBox="0 0 20 20" className="ml-[12px]"><rect x="1" y="6" width="17" height="11" rx="2" stroke="#222" strokeWidth="1.3" fill="#333" /><path d="M4 1 V6 M2 3 H6" stroke="#222" strokeWidth="1.5" /></svg>
        <div className="w-[92px] flex flex-col items-end gap-[8px] text-[14px] text-[#1c1c1c]">
          <span>14:27</span>
          <span>11.10.2024</span>
        </div>
        <svg width="20" height="22" viewBox="0 0 20 22" className="ml-[9px] mr-[25px]"><path d="M4 15 V9 A6 6 0 0 1 16 9 V15 L18 17 H2 Z" stroke="#222" strokeWidth="1.3" fill="none" /><path d="M8 19 A2.5 2.5 0 0 0 12 19" stroke="#222" strokeWidth="1.3" fill="none" /></svg>
      </div>

      {/* Display options popover */}
      <div className="absolute left-[1296px] top-[135px] w-[206px] h-[321px] rounded-lg bg-[#363636] border border-[#202020] px-[10px] pt-[12px] flex flex-col text-[14px] text-[#e2e2e2]">
        <div className="h-[25px] flex items-center">Display mode:</div>
        <Radio label="Normal" on />
        <Radio label="Outline" />
        <Radio label="Outline overlay" />
        <Radio label="Enhance thin lines" />
        <Radio label="No filters" />
        <div className="mt-[4px] flex gap-[5px]">
          <div className="w-[36px] h-[34px] rounded-md border border-[#262626] flex items-center justify-center"><ColorIcon s={18} /></div>
          <div className="w-[36px] h-[34px] rounded-md border border-[#262626] flex items-center justify-center">
            <S s={18}><path d="M3 5 L4.5 3 L6 5 V16 H3 Z" fill="#f4f4f4" /><path d="M8 5 L9.5 3 L11 5 V16 H8 Z" fill="#a8a8a8" /><path d="M13 5 L14.5 3 L16 5 V16 H13 Z" fill="#808080" /></S>
          </div>
        </div>
        <div className="mt-[6px] h-px bg-[#3f3f3f]" />
        <div className="mt-[7px] flex items-center h-[25px]">
          <span className="w-[126px]">Quick zoom:</span>
          <span className="w-[28px] h-[25px] rounded-[3px] bg-[#4c4c4c] flex items-center justify-center font-bold text-[#f0f0f0]">Q</span>
        </div>
        <div className="mt-[2px] flex items-center h-[25px]">
          <span className="w-[126px]">Quick preview:</span>
          <span className="w-[28px] h-[25px] rounded-[3px] bg-[#4c4c4c] flex items-center justify-center font-bold text-[#f0f0f0]">F</span>
        </div>
        <div className="mt-[7px] h-px bg-[#3f3f3f]" />
        <div className="mt-[10px] flex items-center ml-[4px]">
          <span className="w-4 h-4 rounded-[3px] border border-[#1c1c1c] bg-[#3a3a3a] shrink-0" />
          <span className="ml-[5px] whitespace-nowrap">Zoom with window size</span>
        </div>
      </div>

      {/* Tooltip */}
      <svg width="16" height="7" viewBox="0 0 16 7" className="absolute left-[1390px] top-[122px]"><path d="M0 7 L8 0 L16 7 Z" fill="#2a2a2a" /></svg>
      <div className="absolute left-[1335px] top-[128px] w-[129px] h-[47px] rounded-md bg-[#0a0a0a] border border-[#303030] flex items-center justify-center text-[14px] text-white">
        Display options
      </div>
    </div>
  );
}
